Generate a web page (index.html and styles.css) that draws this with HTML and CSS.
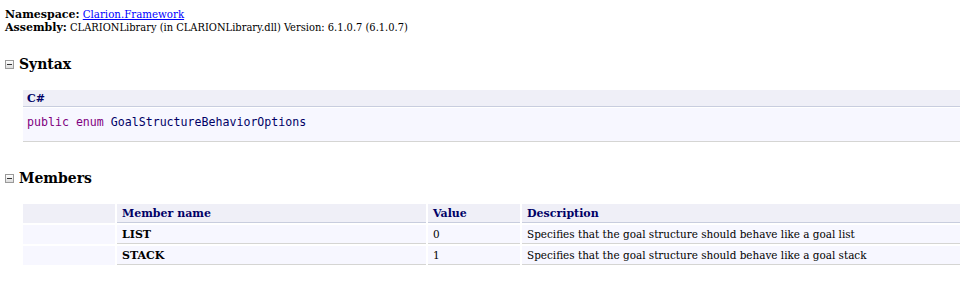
FILE: index.html
```html
<!DOCTYPE html>
<html>
<head>
<meta charset="utf-8">
<link rel="stylesheet" href="styles.css">
</head>
<body>
<div class="info">
  <div><span class="label">Namespace:</span> <a href="#">Clarion.Framework</a></div>
  <div><span class="label">Assembly:</span> CLARIONLibrary (in CLARIONLibrary.dll) Version: 6.1.0.7 (6.1.0.7)</div>
</div>

<h1 class="heading"><span class="toggle"></span>Syntax</h1>
<div class="section">
  <div class="code-block">
    <div class="code-title">C#</div>
    <div class="code-body"><span class="kw">public</span> <span class="kw">enum</span> <span class="id">GoalStructureBehaviorOptions</span></div>
  </div>
</div>

<h1 class="heading members"><span class="toggle"></span>Members</h1>
<div class="section">
  <table class="members-table">
    <tr>
      <th class="icon-col"></th>
      <th class="name-col">Member name</th>
      <th class="value-col">Value</th>
      <th>Description</th>
    </tr>
    <tr>
      <td class="icon-col"></td>
      <td class="name"><b>LIST</b></td>
      <td>0</td>
      <td>Specifies that the goal structure should behave like a goal list</td>
    </tr>
    <tr>
      <td class="icon-col"></td>
      <td class="name"><b>STACK</b></td>
      <td>1</td>
      <td>Specifies that the goal structure should behave like a goal stack</td>
    </tr>
  </table>
</div>
</body>
</html>
```

FILE: styles.css
```css
body {
  margin: 0;
  padding: 8px 14px 0 5px;
  font-family: "DejaVu Serif Condensed", "DejaVu Serif", serif;
  font-size: 11px;
  color: #000;
  background: #fff;
}
b,
.label,
.code-title,
.members-table th {
  font-family: "DejaVu Serif", serif;
  font-weight: bold;
}
.info {
  line-height: 13px;
}
.info a {
  color: #0000ff;
  font-size: 11.4px;
}
.heading {
  display: flex;
  align-items: center;
  margin: 20px 0 0 0;
  font-size: 15.5px;
  line-height: 20px;
  font-weight: bold;
}
.heading.members {
  margin-top: 26px;
}
.toggle {
  display: inline-block;
  width: 7px;
  height: 7px;
  border: 1px solid #9a9a9a;
  background: linear-gradient(#fff, #ddd);
  position: relative;
  margin-right: 5px;
  box-sizing: content-box;
}
.toggle::after {
  content: "";
  position: absolute;
  left: 1px;
  right: 1px;
  top: 3px;
  height: 1px;
  background: #333;
}
.section {
  padding-left: 18px;
}
.code-block {
  margin-top: 16px;
}
.code-title {
  background: #efeff7;
  color: #000066;
  padding: 2px 4px 1px;
  border-bottom: 1px solid #c8cdde;
  line-height: 13px;
}
.code-body {
  margin-top: 1px;
  background: #f7f7ff;
  border-bottom: 1px solid #d5d5d3;
  font-family: "DejaVu Sans Mono", monospace;
  font-size: 11.6px;
  padding: 8px 4px 12px;
  line-height: 13px;
}
.kw {
  color: #800080;
}
.id {
  color: #000066;
}
.members-table {
  margin-top: 14px;
  border-collapse: separate;
  border-spacing: 2px;
  margin-left: -2px;
  width: calc(100% + 4px);
}
.members-table th {
  background: #efeff7;
  color: #000066;
  text-align: left;
  padding: 3px 5px 2px;
  border-bottom: 1px solid #c8cdde;
  line-height: 13px;
}
.members-table td {
  background: #f7f7ff;
  padding: 3px 5px 2px;
  border-bottom: 1px solid #d5d5d3;
  line-height: 13px;
  font-size: 11.6px;
}
.members-table td b {
  font-size: 11px;
}
.members-table .icon-col {
  width: 82px;
  border-bottom: 0;
}
.members-table th.icon-col {
  padding-bottom: 3px;
}
.members-table td.icon-col {
  padding-bottom: 3px;
}
.name-col {
  width: 299px;
}
.value-col {
  width: 82px;
}
```
